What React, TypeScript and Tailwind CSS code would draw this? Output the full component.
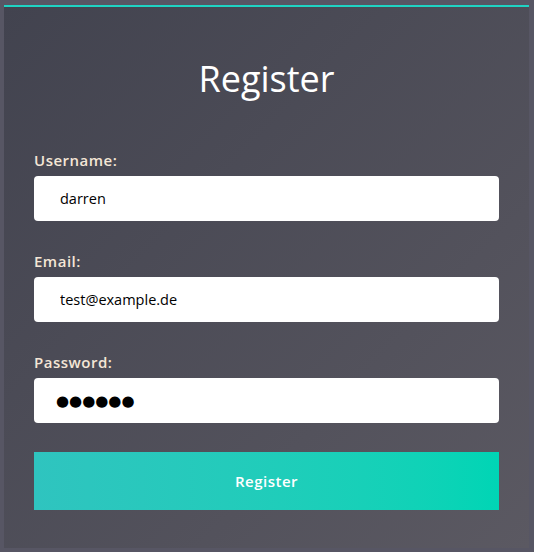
import React from "react";

const fields = [
  { label: "Username:", value: "darren", big: false },
  { label: "Email:", value: "test@example.de", big: false },
  { label: "Password:", value: "●●●●●●", big: true },
];

export default function App() {
  return (
    <div className="min-h-screen w-full bg-[#575664] pl-[4px] pt-[5px] font-['Open_Sans',sans-serif]">
      <div className="w-[525px] h-[543px] border-t-2 border-[#1fd3c3] bg-gradient-to-br from-[#42434f] to-[#5b5962] px-[30px]">
        <h1 className="pt-[47px] text-center text-[36px] leading-[50px] text-white">Register</h1>

        <form className="mt-[46px] flex flex-col" onSubmit={(e) => e.preventDefault()}>
          {fields.map((f) => (
            <div key={f.label} className="mb-[30px]">
              <label className="block text-[15px] font-semibold tracking-[0.5px] text-[#f4e6d6] leading-[20px] mb-[6px]">
                {f.label}
              </label>
              <input
                type="text"
                defaultValue={f.value}
                className={`block w-full h-[45px] rounded-[4px] bg-white text-black outline-none ${
                  f.big ? "px-[22px] text-[15px] font-['DejaVu_Sans',sans-serif]" : "px-[26px] text-[14.5px]"
                }`}
              />
            </div>
          ))}
          <button
            type="submit"
            className="mt-[-1px] h-[58px] w-full bg-gradient-to-r from-[#2fc4bf] to-[#00d5b5] text-[15px] font-semibold tracking-[0.5px] text-white"
          >
            Register
          </button>
        </form>
      </div>
    </div>
  );
}
